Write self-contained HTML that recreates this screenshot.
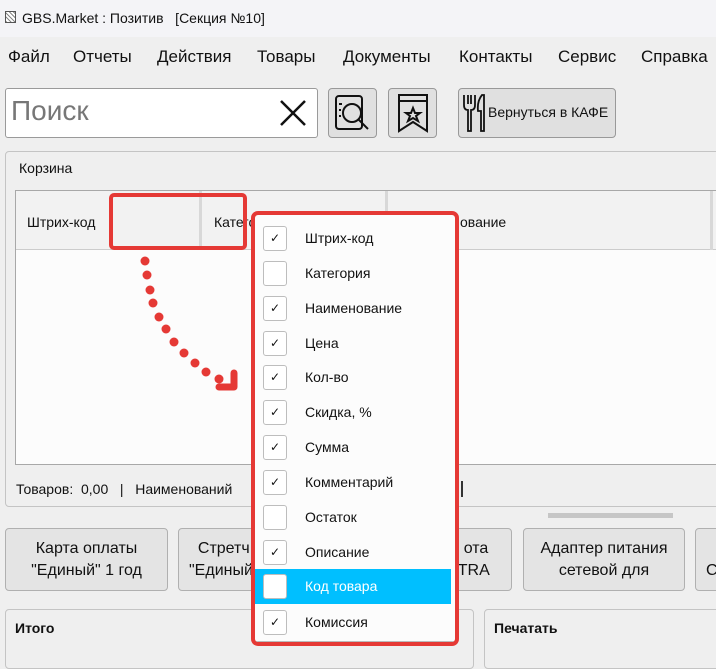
<!DOCTYPE html>
<html><head><meta charset="utf-8"><style>
*{box-sizing:border-box;margin:0;padding:0}
body{width:716px;height:650px;overflow:hidden;background:#efefef;font-family:"Liberation Sans","DejaVu Sans",sans-serif;color:#111;position:relative}
.a{position:absolute}
.t{white-space:nowrap}
.btn{position:absolute;background:#e4e4e4;border:1px solid #b0b0b0;border-radius:4px;text-align:center;font-size:16px;line-height:22px;padding-top:9px;overflow:hidden}
.cb{position:absolute;left:8px;width:24px;height:25px;border:1px solid #bdbdbd;border-radius:3px;background:#fff;font-size:12px;text-align:center;line-height:23px}
.it{position:absolute;left:0;width:196px;height:35px;font-size:14px}
.it span{position:absolute;left:50px;top:9px}
</style></head><body>
<div class="a" style="left:0;top:0;width:716px;height:37px;background:#f4f4f7"></div>
<div class="a" style="left:5px;top:11px;width:11px;height:12px;border:1px solid #555;background:repeating-linear-gradient(45deg,#888 0 1px,#fff 1px 3px)"></div>
<div class="a t" style="left:22px;top:10px;font-size:14px">GBS.Market : Позитив &nbsp; [Секция №10]</div>
<div class="a t" style="left:8px;top:47px;font-size:17px">Файл</div>
<div class="a t" style="left:73px;top:47px;font-size:17px">Отчеты</div>
<div class="a t" style="left:157px;top:47px;font-size:17px">Действия</div>
<div class="a t" style="left:257px;top:47px;font-size:17px">Товары</div>
<div class="a t" style="left:343px;top:47px;font-size:17px">Документы</div>
<div class="a t" style="left:459px;top:47px;font-size:17px">Контакты</div>
<div class="a t" style="left:558px;top:47px;font-size:17px">Сервис</div>
<div class="a t" style="left:641px;top:47px;font-size:17px">Справка</div>
<div class="a" style="left:5px;top:88px;width:313px;height:50px;background:#fff;border:1px solid #9a9a9a;border-radius:3px"></div>
<div class="a t" style="left:11px;top:95px;font-size:28px;color:#777">Поиск</div>
<svg class="a" style="left:279px;top:99px" width="28" height="28"><path d="M2 2L26 26M26 2L2 26" stroke="#111" stroke-width="2.5"/></svg>
<div class="a" style="left:328px;top:88px;width:49px;height:50px;background:#e0e0e0;border:1px solid #999;border-radius:4px"></div>
<svg class="a" style="left:332px;top:92px" width="42" height="42" fill="none" stroke="#111" stroke-width="2"><rect x="4" y="4" width="26" height="33" rx="3"/><circle cx="20" cy="21" r="9" fill="#e0e0e0"/><path d="M26 27l10 10"/><path d="M7 12h3M7 18h2M7 24h2"/></svg>
<div class="a" style="left:388px;top:88px;width:49px;height:50px;background:#e0e0e0;border:1px solid #999;border-radius:4px"></div>
<svg class="a" style="left:396px;top:93px" width="34" height="42" fill="none" stroke="#111" stroke-width="2"><path d="M3 2h28v36l-14-9-14 9z"/><path d="M3 8h28"/><path d="M17 15l2 5h5l-4 3 2 5-5-3-5 3 2-5-4-3h5z"/></svg>
<div class="a" style="left:458px;top:88px;width:158px;height:50px;background:#e0e0e0;border:1px solid #999;border-radius:4px"></div>
<svg class="a" style="left:460px;top:92px" width="28" height="42" fill="none" stroke="#111" stroke-width="1.8"><path d="M4 3v10q0 5 4 5v21h3V18q4 0 4-5V3M8 3v9M11 3v9"/><path d="M22 3q-5 6-4 16h3v20h3V3z"/></svg>
<div class="a t" style="left:488px;top:104px;font-size:14px">Вернуться в КАФЕ</div>

<div class="a" style="left:5px;top:151px;width:720px;height:356px;border:1px solid #c4c4c4;border-radius:4px"></div>
<div class="a t" style="left:19px;top:160px;font-size:14px">Корзина</div>
<div class="a" style="left:15px;top:190px;width:710px;height:275px;background:#fcfcfc;border:1px solid #a8a8a8"></div>
<div class="a" style="left:16px;top:191px;width:710px;height:59px;background:#f2f2f2;border-bottom:1px solid #ccc"></div>
<div class="a" style="left:199px;top:191px;width:3px;height:59px;background:#d8d8d8"></div>
<div class="a" style="left:385px;top:191px;width:3px;height:59px;background:#d8d8d8"></div>
<div class="a" style="left:710px;top:191px;width:3px;height:59px;background:#d8d8d8"></div>
<div class="a t" style="left:27px;top:214px;font-size:14px">Штрих-код</div>
<div class="a t" style="left:214px;top:214px;font-size:14px">Категория</div>
<div class="a t" style="left:460px;top:214px;font-size:14px">ование</div>
<div class="a t" style="left:16px;top:481px;font-size:14px">Товаров: &nbsp;0,00 &nbsp; | &nbsp; Наименований</div>
<div class="a" style="left:461px;top:481px;width:2px;height:16px;background:#333"></div>
<div class="a" style="left:548px;top:513px;width:125px;height:5px;background:#c6c6c6"></div>

<div class="btn" style="left:5px;top:528px;width:163px;height:63px">Карта оплаты<br>"Единый" 1 год</div>
<div class="btn" style="left:178px;top:528px;width:165px;height:63px;text-align:left;padding-left:10px">&nbsp; Стретч<br>"Единый</div>
<div class="btn" style="left:400px;top:528px;width:112px;height:63px">&nbsp; &nbsp; &nbsp; &nbsp; &nbsp;ота<br>&nbsp; &nbsp; &nbsp; &nbsp; TRA</div>
<div class="btn" style="left:523px;top:528px;width:162px;height:63px">Адаптер питания<br>сетевой для</div>
<div class="btn" style="left:695px;top:528px;width:60px;height:63px;text-align:left;padding-left:10px"><br>С</div>
<div class="a" style="left:5px;top:609px;width:469px;height:60px;border:1px solid #c4c4c4;border-radius:4px"></div>
<div class="a t" style="left:15px;top:620px;font-size:14px;font-weight:bold">Итого</div>
<div class="a" style="left:484px;top:609px;width:260px;height:60px;border:1px solid #c4c4c4;border-radius:4px"></div>
<div class="a t" style="left:494px;top:620px;font-size:14px;font-weight:bold">Печатать</div>

<div class="a" style="left:109px;top:193px;width:138px;height:57px;border:4px solid #e53935;border-radius:5px"></div>
<svg class="a" style="left:0;top:0" width="260" height="400" fill="#e53935"><circle cx="145" cy="261" r="4.5"/><circle cx="147" cy="275" r="4.5"/><circle cx="150" cy="290" r="4.5"/><circle cx="153" cy="303" r="4.5"/><circle cx="159" cy="317" r="4.5"/><circle cx="166" cy="329" r="4.5"/><circle cx="174" cy="342" r="4.5"/><circle cx="184" cy="353" r="4.5"/><circle cx="195" cy="363" r="4.5"/><circle cx="206" cy="372" r="4.5"/><circle cx="219" cy="379" r="4.5"/><path d="M234 373v14h-15" fill="none" stroke="#e53935" stroke-width="7" stroke-linecap="round" stroke-linejoin="round"/></svg>

<div class="a" style="left:251px;top:211px;width:208px;height:435px;background:#fcfcfc;border:4px solid #e53935;border-radius:7px;overflow:hidden">
<div class="it" style="top:6px"><div class="cb" style="top:5px">✓</div><span>Штрих-код</span></div>
<div class="it" style="top:41px"><div class="cb" style="top:5px"></div><span>Категория</span></div>
<div class="it" style="top:76px"><div class="cb" style="top:5px">✓</div><span>Наименование</span></div>
<div class="it" style="top:111px"><div class="cb" style="top:5px">✓</div><span>Цена</span></div>
<div class="it" style="top:145px"><div class="cb" style="top:5px">✓</div><span>Кол-во</span></div>
<div class="it" style="top:180px"><div class="cb" style="top:5px">✓</div><span>Скидка, %</span></div>
<div class="it" style="top:215px"><div class="cb" style="top:5px">✓</div><span>Сумма</span></div>
<div class="it" style="top:250px"><div class="cb" style="top:5px">✓</div><span>Комментарий</span></div>
<div class="it" style="top:285px"><div class="cb" style="top:5px"></div><span>Остаток</span></div>
<div class="it" style="top:320px"><div class="cb" style="top:5px">✓</div><span>Описание</span></div>
<div class="it" style="top:354px;background:#00bfff;color:#fff"><div class="cb" style="top:5px"></div><span>Код товара</span></div>
<div class="it" style="top:390px"><div class="cb" style="top:5px">✓</div><span>Комиссия</span></div>
<div class="a" style="left:0;top:426px;width:204px;height:1px;background:#bbb"></div>
</div>
</body></html>
